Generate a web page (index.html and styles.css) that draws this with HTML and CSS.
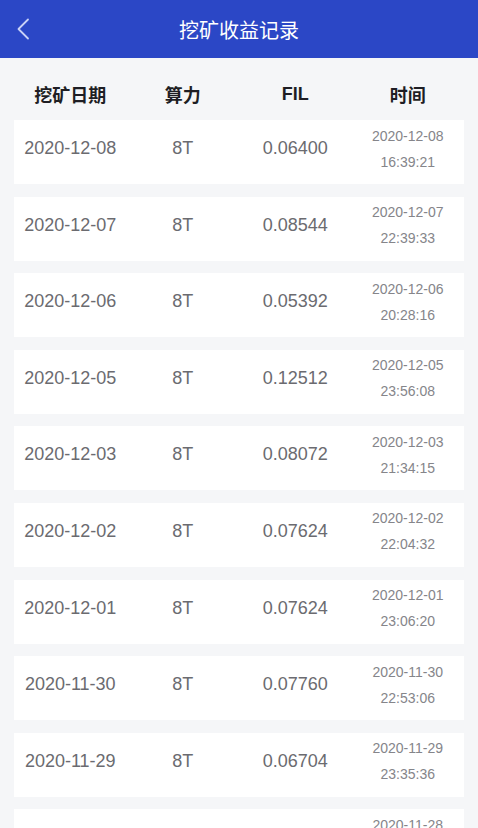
FILE: index.html
```html
<!DOCTYPE html>
<html lang="zh-CN">
<head>
    <meta charset="UTF-8">
    <meta name="viewport" content="width=device-width, initial-scale=1.0">
    <title>挖矿收益记录</title>
    <link rel="stylesheet" href="styles.css">
</head>
<body>
    <header class="nav-bar">
        <a class="back" href="#">
            <svg width="14" height="22" viewBox="0 0 14 22"><path d="M12 1.5 L2.5 11 L12 20.5" fill="none" stroke="#c9d2f6" stroke-width="1.8" stroke-linecap="round" stroke-linejoin="round"/></svg>
        </a>
        <h1>挖矿收益记录</h1>
    </header>

    <div class="table-head">
        <span>挖矿日期</span>
        <span>算力</span>
        <span>FIL</span>
        <span>时间</span>
    </div>

    <div class="record-list">
        <div class="record">
            <span class="date">2020-12-08</span>
            <span class="power">8T</span>
            <span class="fil">0.06400</span>
            <span class="time">2020-12-08<br>16:39:21</span>
        </div>
        <div class="record">
            <span class="date">2020-12-07</span>
            <span class="power">8T</span>
            <span class="fil">0.08544</span>
            <span class="time">2020-12-07<br>22:39:33</span>
        </div>
        <div class="record">
            <span class="date">2020-12-06</span>
            <span class="power">8T</span>
            <span class="fil">0.05392</span>
            <span class="time">2020-12-06<br>20:28:16</span>
        </div>
        <div class="record">
            <span class="date">2020-12-05</span>
            <span class="power">8T</span>
            <span class="fil">0.12512</span>
            <span class="time">2020-12-05<br>23:56:08</span>
        </div>
        <div class="record">
            <span class="date">2020-12-03</span>
            <span class="power">8T</span>
            <span class="fil">0.08072</span>
            <span class="time">2020-12-03<br>21:34:15</span>
        </div>
        <div class="record">
            <span class="date">2020-12-02</span>
            <span class="power">8T</span>
            <span class="fil">0.07624</span>
            <span class="time">2020-12-02<br>22:04:32</span>
        </div>
        <div class="record">
            <span class="date">2020-12-01</span>
            <span class="power">8T</span>
            <span class="fil">0.07624</span>
            <span class="time">2020-12-01<br>23:06:20</span>
        </div>
        <div class="record">
            <span class="date">2020-11-30</span>
            <span class="power">8T</span>
            <span class="fil">0.07760</span>
            <span class="time">2020-11-30<br>22:53:06</span>
        </div>
        <div class="record">
            <span class="date">2020-11-29</span>
            <span class="power">8T</span>
            <span class="fil">0.06704</span>
            <span class="time">2020-11-29<br>23:35:36</span>
        </div>
        <div class="record">
            <span class="date">2020-11-28</span>
            <span class="power">8T</span>
            <span class="fil">0.07208</span>
            <span class="time">2020-11-28<br>22:41:09</span>
        </div>
    </div>
</body>
</html>
```

FILE: styles.css
```css
body {
    margin: 0;
    background: #f5f6f8;
    font-family: "Liberation Sans", Arial, "Noto Sans CJK SC", sans-serif;
    overflow: hidden;
}
.nav-bar {
    position: relative;
    height: 58px;
    background: #2b47c6;
    display: flex;
    align-items: center;
    justify-content: center;
}
.nav-bar h1 {
    margin: 0;
    color: #fff;
    font-size: 20px;
    font-weight: normal;
    font-family: "Noto Sans CJK SC", sans-serif;
}
.back {
    position: absolute;
    left: 16px;
    top: 18px;
    display: block;
}
.table-head {
    height: 62px;
    margin: 0 14px;
    display: grid;
    grid-template-columns: repeat(4, 1fr);
    align-items: center;
    padding-top: 10px;
    box-sizing: border-box;
}
.table-head span {
    text-align: center;
    font-size: 18px;
    font-weight: bold;
    color: #1e1e24;
    font-family: "Liberation Sans", "Noto Sans CJK SC", sans-serif;
}
.record-list {
    padding: 0 14px;
}
.record {
    background: #fff;
    height: 64px;
    margin-bottom: 12.6px;
    display: grid;
    grid-template-columns: repeat(4, 1fr);
    align-items: center;
    padding: 2px 0 9px;
    box-sizing: border-box;
    text-align: center;
}
.date, .power, .fil {
    font-size: 18px;
    color: #6b6b70;
}
.time {
    font-size: 14px;
    line-height: 26px;
    color: #85858a;
}
```
